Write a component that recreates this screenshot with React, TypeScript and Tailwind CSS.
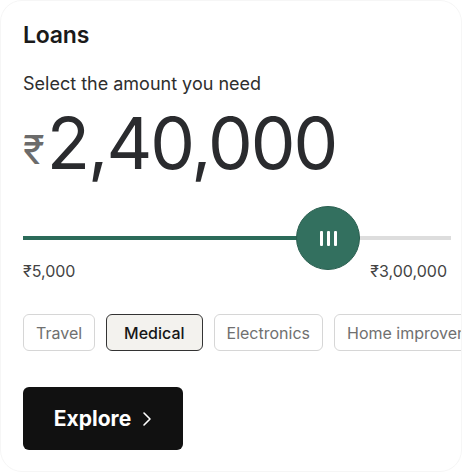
import React, { useState } from 'react';

const categories = ['Travel', 'Medical', 'Electronics', 'Home improvement'];

export default function App() {
  const [selected, setSelected] = useState('Medical');
  const fill = 305; // px from track start to thumb centre

  return (
    <div className="w-[462px] h-[472px] bg-white overflow-hidden" style={{ fontFamily: 'Inter, "Noto Sans", sans-serif' }}>
      <div className="w-full h-full rounded-[22px] border border-[#f6f6f6] pl-[22px] pt-[20px] flex flex-col">
        {/* Header */}
        <h1 className="text-[23px] leading-[28px] font-semibold text-[#1a1a1a] tracking-[-0.2px]">Loans</h1>

        <p className="mt-[23px] text-[18px] leading-[24px] text-[#2e2e2e]">Select the amount you need</p>

        {/* Amount */}
        <div className="mt-[9px] flex items-end text-[#2a2b2e]">
          <span className="text-[40px] leading-[40px] text-[#6b6b6b] mb-[11px] mr-[2px]">₹</span>
          <span className="text-[71px] leading-[76px] tracking-[-2px]">2,40,000</span>
        </div>

        {/* Slider */}
        <div className="relative w-[428px] h-[20px] mt-[47px] flex items-center">
          <div className="h-[4px] bg-[#2b6b59]" style={{ width: fill }} />
          <div className="h-[4px] flex-1 bg-[#dddddd]" />
          <div
            className="absolute top-1/2 -translate-y-1/2 w-[64px] h-[64px] rounded-full bg-[#33705f] border border-[#2a5f50] flex items-center justify-center gap-[4px]"
            style={{ left: fill - 32 }}
          >
            <span className="w-[3px] h-[15px] bg-white rounded-[1px]" />
            <span className="w-[3px] h-[15px] bg-white rounded-[1px]" />
            <span className="w-[3px] h-[15px] bg-white rounded-[1px]" />
          </div>
        </div>

        <div className="mt-[13px] w-[424px] flex justify-between text-[16px] leading-[20px] text-[#444]">
          <span>₹5,000</span>
          <span>₹3,00,000</span>
        </div>

        {/* Categories */}
        <div className="mt-[33px] flex gap-[11px] overflow-hidden whitespace-nowrap">
          {categories.map(c => {
            const active = c === selected;
            return (
              <button
                key={c}
                onClick={() => setSelected(c)}
                className={
                  active
                    ? 'shrink-0 h-[37px] px-[17px] rounded-[6px] border-[1.5px] border-[#333] bg-[#f3f2ee] text-[16px] font-medium text-[#161616]'
                    : 'shrink-0 h-[37px] px-[12px] rounded-[6px] border-[1.5px] border-[#d6d6d6] bg-white text-[16px] text-[#707070]'
                }
              >
                {c}
              </button>
            );
          })}
        </div>

        {/* CTA */}
        <button className="mt-[36px] w-[160px] h-[63px] rounded-[6px] bg-[#111111] text-white flex items-center justify-center gap-[11px]">
          <span className="text-[21px] font-bold">Explore</span>
          <svg width="10" height="16" viewBox="0 0 10 16" fill="none" stroke="white" strokeWidth="1.6" strokeLinecap="round" strokeLinejoin="round">
            <path d="M2 2l6 6-6 6" />
          </svg>
        </button>
      </div>
    </div>
  );
}
